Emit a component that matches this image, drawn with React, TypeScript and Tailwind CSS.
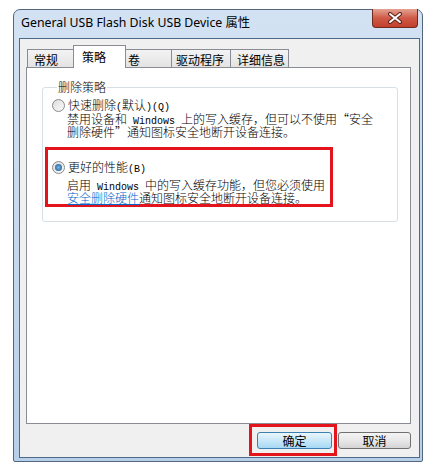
const cjk = "font-['Noto_Sans_CJK_SC',sans-serif]"
const mono = "font-['Liberation_Mono','Noto_Sans_CJK_SC',monospace] text-[10px] leading-none"

const tabs = [
  { label: "常规", w: "w-[47px]", pl: "pl-[6px]", active: false },
  { label: "策略", w: "w-[53px]", pl: "pl-[8px]", active: true },
  { label: "卷", w: "w-[47px]", pl: "pl-[2px]", active: false },
  { label: "驱动程序", w: "w-[60px]", pl: "pl-[4px]", active: false },
  { label: "详细信息", w: "w-[59px]", pl: "pl-[6px]", active: false },
]

function Radio({ checked }: { checked?: boolean }) {
  return (
    <span className="w-[13px] h-[13px] rounded-full border border-[#8a8a8a] bg-linear-to-br from-[#dcdcdc] to-[#fbfbfb] flex items-center justify-center shrink-0">
      {checked && (
        <span className="w-[7px] h-[7px] rounded-full bg-radial from-[#7ab8e8] to-[#124f88]" />
      )}
    </span>
  )
}

function CloseButton() {
  return (
    <div className="w-[46px] h-[19px] mr-[4px] -mt-px rounded-b-[4px] border border-t-0 border-[#6e2b22] bg-linear-to-b from-[#e4a292] via-[#cf5a47] to-[#c13f2b] flex items-center justify-center">
      <svg width="16" height="12" viewBox="0 0 16 12">
        <path d="M3 2 L13 10 M13 2 L3 10" stroke="#5a2019" strokeWidth="4" strokeLinecap="round" />
        <path d="M3 2 L13 10 M13 2 L3 10" stroke="#ffffff" strokeWidth="2" strokeLinecap="round" />
      </svg>
    </div>
  )
}

export default function App() {
  return (
    <div className="w-[439px] h-[471px] bg-white pl-[13px] pt-[9px]">
      <div className="w-[410px] h-[453px] rounded-t-[7px] rounded-b-[2px] border border-[#53667c] bg-linear-to-b from-[#d3e2f3] to-[#b8cfe9] flex flex-col">
        {/* title bar */}
        <div className="h-[28px] flex items-start justify-between">
          <div className="pl-[7px] pt-[5px] text-[12.3px] leading-[16px] text-black font-['Noto_Sans','Noto_Sans_CJK_SC',sans-serif]">
            General USB Flash Disk USB Device 属性
          </div>
          <CloseButton />
        </div>

        {/* body */}
        <div className="ml-[5px] mr-[2px] mb-[3px] flex-1 border border-[#4d6a89] bg-[#f0f0f0] flex flex-col pl-[6px] pr-[8px] pt-[6px]">
          <div className={`flex items-end h-[22px] pl-px text-[12px] leading-[14px] text-black ${cjk}`}>
            {tabs.map((t) =>
              t.active ? (
                <div
                  key={t.label}
                  className={`${t.w} ${t.pl} h-[23px] -mb-px -ml-px relative z-10 bg-white border border-b-0 border-[#898c95] flex items-center`}
                >
                  {t.label}
                </div>
              ) : (
                <div
                  key={t.label}
                  className={`${t.w} ${t.pl} h-[18px] -ml-px first:ml-0 bg-linear-to-b from-[#f3f3f3] to-[#e3e3e3] border border-b-0 border-[#898c95] flex items-center pt-[2px]`}
                >
                  {t.label}
                </div>
              )
            )}
          </div>

          {/* tab page */}
          <div className={`h-[357px] bg-white border border-[#898c95] pl-[15px] pr-[12px] text-[12px] font-light text-black ${cjk}`}>
            <fieldset className="mt-[12px] border border-[#d5dfe5] rounded-[3px] pl-[9px] pb-[14px]">
              <legend className="ml-[5px] px-px leading-[14px]">删除策略</legend>

              <div className="mt-[4px] flex items-center gap-[3px] h-[14px] leading-[14px]">
                <Radio />
                <span>
                  快速删除<span className={mono}>(</span>默认<span className={mono}>)(Q)</span>
                </span>
              </div>
              <div className="ml-[15px] leading-[13px]">
                <div className="h-[13px]">
                  禁用设备和<span className={mono}> Windows </span>上的写入缓存，但可以不使用“安全
                </div>
                <div className="h-[13px]">删除硬件”通知图标安全地断开设备连接。</div>
              </div>

              <div className="mt-[9px] -ml-[7px] w-[288px] border-[3px] border-[#e3141b] pl-[4px] pt-[10px]">
                <div className="flex items-center gap-[3px] h-[14px] leading-[14px]">
                  <Radio checked />
                  <span>
                    更好的性能<span className={mono}>(B)</span>
                  </span>
                </div>
                <div className="mt-[4px] ml-[15px] leading-[13px] whitespace-nowrap">
                  <div className="h-[13px]">
                    启用<span className={mono}> Windows </span>中的写入缓存功能，但您必须使用
                  </div>
                  <div className="h-[13px]">
                    <span className="text-[#0066cc] underline">安全删除硬件</span>通知图标安全地断开设备连接。
                  </div>
                </div>
              </div>
            </fieldset>
          </div>

          {/* buttons */}
          <div className={`mt-[8px] flex justify-end gap-[6px] text-[12px] leading-[14px] text-black ${cjk}`}>
            <div className="relative">
              <button className="w-[75px] h-[17px] rounded-[3px] border border-[#3c7fb1] bg-linear-to-b from-[#eaf6fd] via-[#c8e7f8] to-[#a7d9f5] flex items-center justify-center">
                确定
              </button>
              <div className="absolute -left-[8px] -top-[8px] -right-[5px] -bottom-[7px] border-[3px] border-[#e3141b]" />
            </div>
            <button className="w-[73px] h-[17px] rounded-[3px] border border-[#707070] bg-linear-to-b from-[#f4f4f4] via-[#e8e8e8] to-[#d4d4d4] flex items-center justify-center">
              取消
            </button>
          </div>
        </div>
      </div>
    </div>
  )
}
